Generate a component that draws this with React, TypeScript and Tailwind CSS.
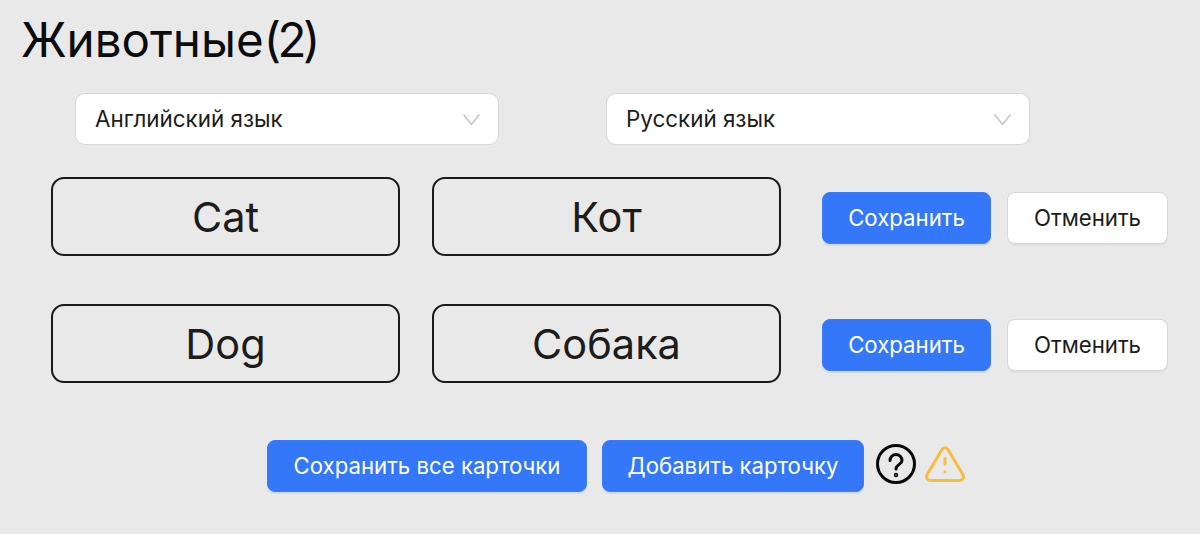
const primaryBtn =
  'flex h-[52px] items-center justify-center rounded-[8px] border border-[#3b7bf8] bg-[#3478f9] text-[22.2px] text-white shadow-[0_2px_0_rgba(52,120,249,0.12)]';
const defaultBtn =
  'flex h-[52px] items-center justify-center rounded-[8px] border border-[#d6d6d6] bg-white text-[22.2px] text-[#1c1c1c] shadow-[0_2px_0_rgba(0,0,0,0.03)]';

function LangSelect({ label }: { label: string }) {
  return (
    <div className="flex h-[52px] w-[424px] items-center justify-between rounded-[10px] border border-[#d6d6d6] bg-white pl-[19px] pr-[17px] text-[22.4px] text-[#1c1c1c]">
      <span>{label}</span>
      <svg width="19" height="13" viewBox="0 0 19 13" fill="none" stroke="#c2c2c2" strokeWidth="1.4">
        <path d="M1.500 1.500 9.500 11.500 17.500 1.500" />
      </svg>
    </div>
  );
}

function Field({ value }: { value: string }) {
  return (
    <div className="flex h-[79px] w-[349px] items-center justify-center rounded-[13px] border-2 border-[#1a1a1a] pt-[2px] text-[41.5px] text-[#1c1c1c]">
      {value}
    </div>
  );
}

function CardRow({ en, ru }: { en: string; ru: string }) {
  return (
    <div className="flex items-center pl-[51px]">
      <Field value={en} />
      <div className="ml-[32px]">
        <Field value={ru} />
      </div>
      <button className={`${primaryBtn} ml-[41px] mt-[2px] w-[169px]`}>Сохранить</button>
      <button className={`${defaultBtn} ml-[16px] mt-[2px] w-[161px]`}>Отменить</button>
    </div>
  );
}

export default function App() {
  return (
    <main className="h-[534px] w-[1200px] overflow-hidden bg-[#e9e9e9] font-['Inter',sans-serif]">
      <h1 className="pl-[21px] pt-[11px] text-[47.5px] leading-[58px] text-[#0c0c0c]">
        Животные<span className="tracking-[-3.5px]">(2)</span>
      </h1>

      <div className="mt-[24px] flex gap-[107px] pl-[75px]">
        <LangSelect label="Английский язык" />
        <LangSelect label="Русский язык" />
      </div>

      <div className="mt-[32px] flex flex-col gap-[48px]">
        <CardRow en="Cat" ru="Кот" />
        <CardRow en="Dog" ru="Собака" />
      </div>

      <div className="mt-[57px] flex items-center pl-[267px]">
        <button className={`${primaryBtn} w-[320px]`}>Сохранить все карточки</button>
        <button className={`${primaryBtn} ml-[15px] w-[262px]`}>Добавить карточку</button>
        <svg className="mb-[4px] ml-[12px]" width="40" height="40" viewBox="0 0 40 40" fill="none" stroke="#0a0a0a" strokeWidth="3" strokeLinecap="round">
          <circle cx="20" cy="20" r="18.500" />
          <path d="M14 16.500a6 6 0 0 1 12 0c0 3.800-6 4-6 8.500" />
          <circle cx="20" cy="31" r="0.700" fill="#0a0a0a" />
        </svg>
        <svg className="mb-[5px] ml-[9px]" width="40" height="36" viewBox="0 0 40 36" fill="none" stroke="#f6bd41" strokeWidth="3" strokeLinecap="round" strokeLinejoin="round">
          <path d="M17 3.500 2.200 28.500C.5 31.500 2.200 34.500 5.500 34.500h29c3.300 0 5-3 3.300-6L23 3.500c-1.400-2.500-4.600-2.500-6 0Z" />
          <path d="M20 12.500v5.500" />
          <path d="M20 25.700v.2" />
        </svg>
      </div>
    </main>
  );
}
